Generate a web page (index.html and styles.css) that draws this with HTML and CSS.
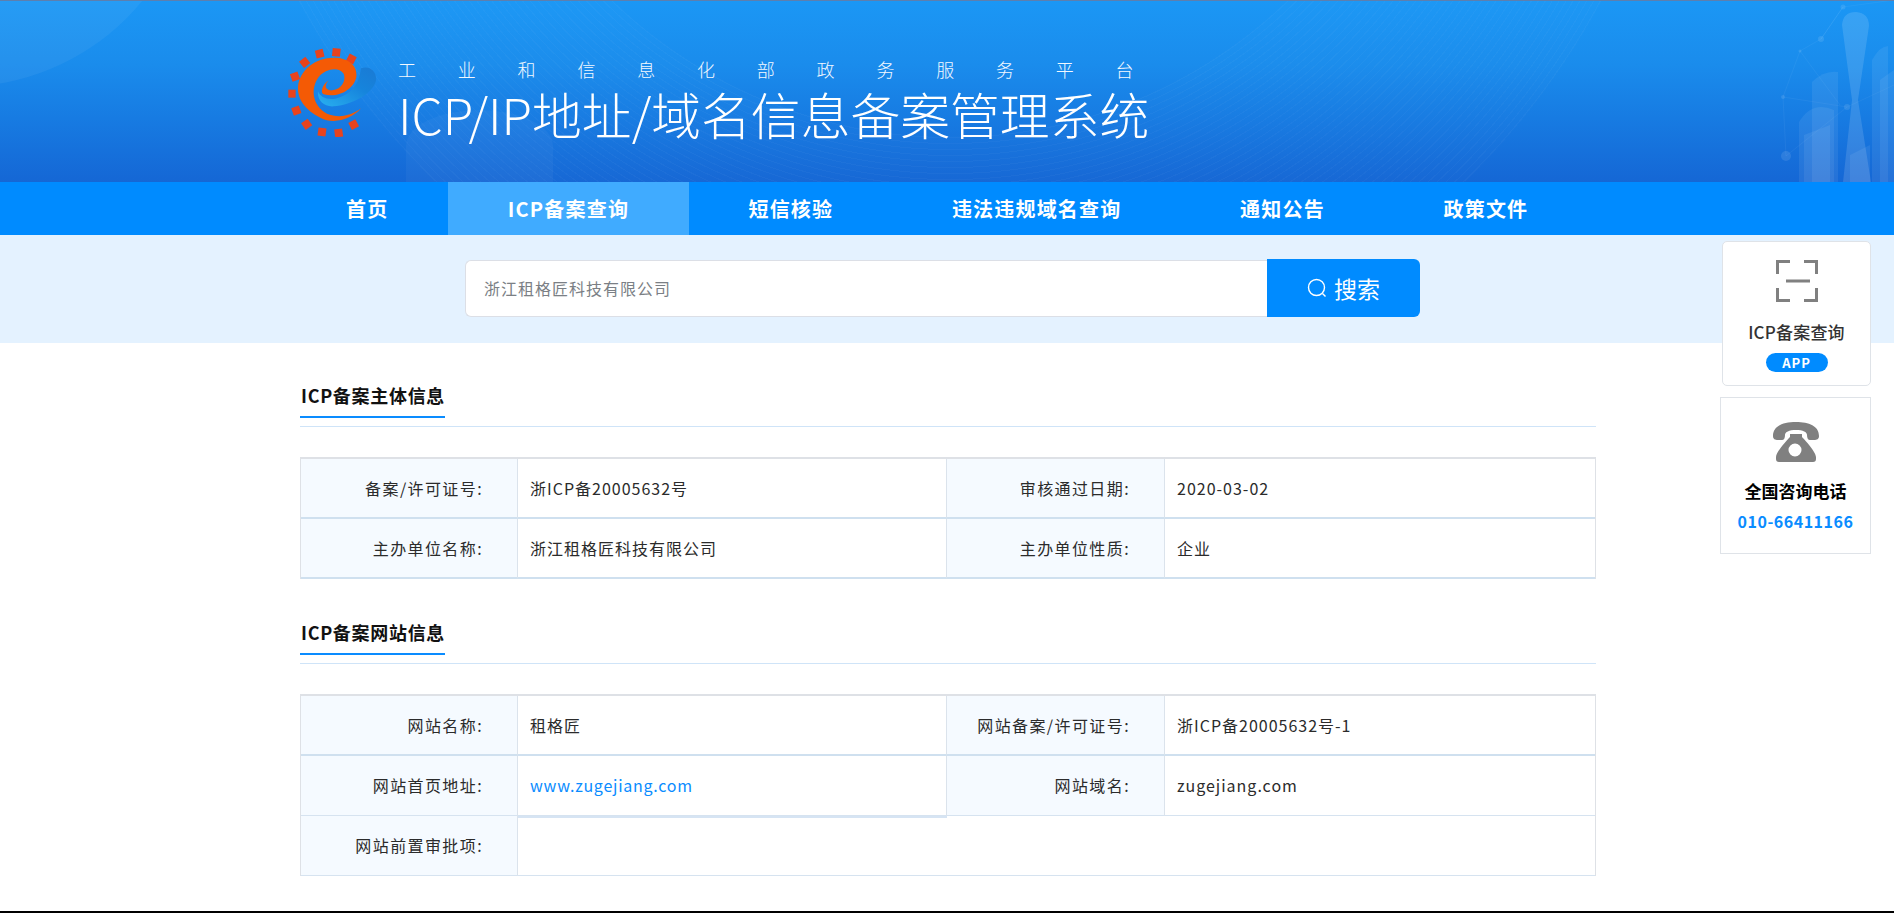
FILE: index.html
```html
<!DOCTYPE html>
<html lang="zh-CN">
<head>
<meta charset="utf-8">
<title>ICP/IP地址/域名信息备案管理系统</title>
<link rel="stylesheet" href="styles.css">
</head>
<body>
<div class="page">
  <header class="banner">
    <div class="glow glow-left"></div>
    <div class="glow glow-low"></div>
    <div class="waves"></div>
    <svg class="city" viewBox="0 0 154 182" aria-hidden="true">
      <g stroke="#fff" stroke-opacity=".07" stroke-width=".7" fill="none">
        <path d="M103 7 81 39 60 51 43 97 46 156M60 51 100 105M81 39 103 7 154 0M43 97 107 107 154 85M46 156 107 107"/>
      </g>
      <g fill="#fff" fill-opacity=".1">
        <circle cx="103" cy="7" r="2.5"/><circle cx="81" cy="39" r="3"/><circle cx="60" cy="51" r="1.5"/><circle cx="43" cy="97" r="2"/><circle cx="46" cy="156" r="5"/><circle cx="107" cy="107" r="3"/>
      </g>
      <g fill="#fff" fill-opacity=".07">
        <path d="M72 82Q84 70 98 72V182H72Z"/>
        <path d="M132 60q8-14 16-14v136h-16Z"/>
        <path d="M140 80 154 70V182H140Z"/>
        <path d="M59 122Q72 100 94 110V182H59Z"/>
        <path d="M64 135 90 125V182H64Z"/>
        <path d="M110 155 130 145V182H110Z"/>
      </g>
      <path d="M102 25Q103 12 116 12 129 13 129 26L118 100 131 182H103L112 100Z" fill="#fff" fill-opacity=".13"/>
    </svg>
    <div class="brand">
      <svg class="logo" viewBox="50 50 270 270" aria-hidden="true">
        <defs>
          <linearGradient id="swoosh" x1="0" y1="1" x2="1" y2="0">
            <stop offset="0" stop-color="#29b0f0"/>
            <stop offset=".6" stop-color="#1684dc"/>
            <stop offset="1" stop-color="#1a7ad4"/>
          </linearGradient>
        </defs>
        <g fill="#e8431d">
          <rect x="136" y="58" width="24" height="24" transform="rotate(-14 148 70)"/>
          <rect x="186" y="54" width="24" height="24" transform="rotate(6 198 66)"/>
          <rect x="231" y="74" width="24" height="24" transform="rotate(28 243 86)"/>
          <rect x="91" y="84" width="24" height="24" transform="rotate(-38 103 96)"/>
          <rect x="62" y="127" width="24" height="24" transform="rotate(-20 74 139)"/>
          <rect x="54" y="178" width="22" height="24"/>
          <rect x="66" y="229" width="24" height="24" transform="rotate(-20 78 241)"/>
          <rect x="97" y="270" width="24" height="24" transform="rotate(-35 109 282)"/>
          <rect x="143" y="293" width="24" height="24" transform="rotate(8 155 305)"/>
          <rect x="193" y="296" width="24" height="24" transform="rotate(-8 205 308)"/>
          <rect x="238" y="271" width="24" height="24" transform="rotate(-28 250 283)"/>
        </g>
        <path fill="url(#swoosh)" d="M272 114C298 104 320 124 317 150 310 190 240 226 190 228 160 230 140 210 143 183 150 200 170 210 195 205 240 195 266 165 272 114Z"/>
        <path fill="#f45a05" d="M272 234C245 266 190 284 150 262 105 240 80 205 83 170 88 115 140 80 195 82 240 84 262 110 258 140 252 175 205 205 160 192 150 188 154 165 175 150 158 168 168 182 186 180 215 176 228 150 220 130 205 108 165 115 145 140 120 175 125 225 170 250 205 265 245 256 272 234Z"/>
      </svg>
      <div class="brand-text">
        <p class="org">工业和信息化部政务服务平台</p>
        <h1 class="system">ICP/IP地址/域名信息备案管理系统</h1>
      </div>
    </div>
  </header>

  <nav class="nav">
    <a class="nav-item">首页</a>
    <a class="nav-item is-active">ICP备案查询</a>
    <a class="nav-item">短信核验</a>
    <a class="nav-item">违法违规域名查询</a>
    <a class="nav-item">通知公告</a>
    <a class="nav-item">政策文件</a>
  </nav>

  <div class="search-band">
    <div class="search">
      <div class="search-input">浙江租格匠科技有限公司</div>
      <button class="search-btn">
        <svg class="search-icon" viewBox="0 0 20 20" aria-hidden="true">
          <circle cx="9.5" cy="9.5" r="8"/><path d="M15.5 15.5 18.5 18.5"/>
        </svg>
        <span>搜索</span>
      </button>
    </div>
  </div>

  <main class="content">
    <section class="block">
      <h2 class="block-title"><span>ICP备案主体信息</span></h2>
      <table class="info">
        <colgroup><col class="c1"><col class="c2"><col class="c3"><col class="c4"></colgroup>
        <tr class="row-thick">
          <th>备案/许可证号:</th><td>浙ICP备20005632号</td>
          <th>审核通过日期:</th><td>2020-03-02</td>
        </tr>
        <tr class="row-thick">
          <th>主办单位名称:</th><td>浙江租格匠科技有限公司</td>
          <th>主办单位性质:</th><td>企业</td>
        </tr>
      </table>
    </section>

    <section class="block">
      <h2 class="block-title"><span>ICP备案网站信息</span></h2>
      <table class="info">
        <colgroup><col class="c1"><col class="c2"><col class="c3"><col class="c4"></colgroup>
        <tr class="row-thick">
          <th>网站名称:</th><td>租格匠</td>
          <th>网站备案/许可证号:</th><td>浙ICP备20005632号-1</td>
        </tr>
        <tr>
          <th>网站首页地址:</th><td class="cell-double"><a class="link">www.zugejiang.com</a></td>
          <th>网站域名:</th><td>zugejiang.com</td>
        </tr>
        <tr>
          <th>网站前置审批项:</th><td colspan="3"></td>
        </tr>
      </table>
    </section>
  </main>

  <div class="bottom-rule"></div>

  <aside class="side">
    <div class="side-card side-app">
      <svg class="scan-icon" viewBox="0 0 42 42" aria-hidden="true">
        <path d="M14 1.5H1.5V14M28 1.5H40.5V14M14 40.5H1.500V28M28 40.5H40.5V28M10 21H34"/>
      </svg>
      <div class="app-name">ICP备案查询</div>
      <div class="app-pill">APP</div>
    </div>
    <div class="side-card side-tel">
      <svg class="tel-icon" viewBox="0 0 46 40" aria-hidden="true">
        <path d="M0 14C0 4 10 0 23 0S46 4 46 14C46 17 44 18 41 18H37C35 18 34 16 34 13 34 10 30 8 23 8S12 10 12 13C12 16 11 18 9 18H5C2 18 0 17 0 14Z"/>
        <path fill-rule="evenodd" d="M17 12H29V15C32 18 43 30 43 35V37C43 39 42 40 40 40H6C4 40 3 39 3 37V35C3 30 14 18 17 15ZM22 21.500A6.500 6.500 0 1 0 22 34.500 6.500 6.500 0 1 0 22 21.500Z"/>
      </svg>
      <div class="tel-label">全国咨询电话</div>
      <div class="tel-number">010-66411166</div>
    </div>
  </aside>
</div>
</body>
</html>
```
FILE: styles.css
```css
* { box-sizing: border-box; }
html, body { margin: 0; padding: 0; background: #fff; }
body {
  font-family: "Noto Sans CJK SC", "Noto Sans", sans-serif;
  color: #333;
  overflow: hidden;
}
.page { position: relative; width: 1894px; height: 913px; overflow: hidden; display: flex; flex-direction: column; }

/* banner */
.banner {
  position: relative;
  height: 182px;
  flex: none;
  overflow: hidden;
  border-top: 1px solid #5d7fae;
  background: linear-gradient(180deg, #1b97f5 0%, #1a8cec 35%, #177be2 65%, #1567d5 100%);
  padding: 46px 0 0 287px;
}
.glow { position: absolute; background: rgba(255,255,255,.05); }
.glow-left { width: 472px; height: 472px; left: -276px; top: -386px; border-radius: 50%; }
.glow-low { width: 147px; height: 72px; left: 406px; top: 109px; border-radius: 100% 100% 0 0 / 100% 100% 0 0; background: rgba(255,255,255,.035); }
.waves {
  position: absolute;
  width: 1480px; height: 1480px;
  left: 210px; top: -1090px;
  border-radius: 50%;
  background: repeating-radial-gradient(circle at center, rgba(255,255,255,.035) 0 1px, rgba(255,255,255,.012) 1px 6px);
  -webkit-mask-image: radial-gradient(circle at center, transparent 0 485px, #000 486px 740px);
  mask-image: radial-gradient(circle at center, transparent 0 485px, #000 486px 740px);
}
.city { position: absolute; right: 0; top: -1px; width: 154px; height: 182px; }
.brand { position: relative; display: flex; gap: 21px; align-items: flex-start; }
.logo { width: 90px; height: 90px; flex: none; }
.brand-text { padding-top: 9px; }
.org {
  margin: 0;
  font-size: 18px;
  line-height: 26px;
  font-weight: 300;
  letter-spacing: 41.8px;
  color: #f2f8ff;
  white-space: nowrap;
}
.system {
  margin: 2px 0 0;
  font-size: 49.8px;
  line-height: 58px;
  font-weight: 300;
  color: #fff;
  white-space: nowrap;
}

/* nav */
.nav {
  height: 53px;
  flex: none;
  background: #008bff;
  padding-left: 286px;
  display: flex;
}
.nav-item {
  padding: 0 59.3px;
  font-size: 20px;
  font-weight: 700;
  letter-spacing: 1.2px;
  line-height: 53px;
  color: #fff;
  white-space: nowrap;
}
.nav-item:first-child { padding-left: 60px; }
.nav-item.is-active { padding: 0 60px; background: #40abff; }

/* search */
.search-band {
  height: 108px;
  flex: none;
  background: #e4f2ff;
  padding: 24px 0 0 465px;
}
.search { width: 955px; height: 58px; display: flex; }
.search-input {
  flex: 1;
  margin-top: 1px;
  background: #fff;
  border: 1px solid #dcdfe6;
  border-right: 0;
  border-radius: 6px 0 0 6px;
  padding-left: 18px;
  font-size: 16px;
  letter-spacing: 1px;
  line-height: 55px;
  color: #7b7f85;
}
.search-btn {
  width: 153px;
  border: 0;
  border-radius: 0 6px 6px 0;
  background: #008bff;
  color: #fff;
  font: 400 23px/58px "Noto Sans CJK SC", sans-serif;
  display: flex;
  align-items: center;
  justify-content: center;
  gap: 7px;
  padding: 0;
}
.search-icon { width: 20px; height: 20px; fill: none; stroke: #fff; stroke-width: 1.4; }

/* content */
.content { padding: 40px 298px 0 300px; }
.block + .block { margin-top: 41px; }
.block-title {
  margin: 0;
  padding-bottom: 8px;
  border-bottom: 1px solid #cfe4f8;
  font-size: 18px;
  font-weight: 700;
  letter-spacing: .7px;
  color: #111;
  line-height: 24px;
}
.block-title span { display: block; width: 145px; border-bottom: 2px solid #0a8cff; white-space: nowrap; padding-left: 1px; height: 35px; }
.info {
  margin-top: 30px;
  width: 1296px;
  table-layout: fixed;
  border-collapse: separate;
  border-spacing: 0;
  border-top: 2px solid #dee1e6;
  border-left: 1px solid #dee1e6;
  border-right: 1px solid #dee1e6;
  font-size: 16px;
}
.c1 { width: 217px; }
.c2 { width: 429px; }
.c3 { width: 218px; }
.info th, .info td {
  height: 60px;
  padding: 0 0 1px;
  font-weight: 400;
  letter-spacing: 1px;
  border-bottom: 1px solid #d6e3f0;
  border-right: 1px solid #dbe3ec;
  color: #2b2b2b;
  white-space: nowrap;
  vertical-align: middle;
}
.info td:last-child { border-right: 0; }
.info th { background: #f5faff; text-align: right; padding-right: 34px; letter-spacing: 1.4px; }
.info td { padding-left: 12px; }
.row-thick th, .row-thick td { border-bottom: 2px solid #cfe0ef; height: 60px; }
.cell-double { box-shadow: 0 2px 0 #d6e4f3; }
.link { color: #0a8cff; letter-spacing: .75px; }
.bottom-rule { position: absolute; left: 0; right: 0; bottom: 0; height: 2px; background: #000; }

/* side */
.side { position: absolute; left: 1720px; top: 241px; width: 151px; display: flex; flex-direction: column; align-items: flex-end; gap: 11px; }
.side-card { background: #fff; border: 1px solid #dfe3e8; display: flex; flex-direction: column; align-items: center; }
.side-app { width: 149px; height: 145px; border-radius: 5px; padding-top: 18px; }
.side-tel { width: 151px; height: 157px; padding-top: 24px; }
.scan-icon { width: 42px; height: 42px; fill: none; stroke: #808080; stroke-width: 3; }
.app-name { margin-top: 18px; font-size: 17px; letter-spacing: .2px; line-height: 24px; font-weight: 500; color: #333; }
.app-pill { margin-top: 9px; width: 62px; height: 19px; border-radius: 10px; background: #008bff; color: #fff; font-size: 13px; font-weight: 700; line-height: 19px; text-align: center; letter-spacing: 1px; }
.tel-icon { width: 46px; height: 40px; fill: #808080; }
.tel-label { margin-top: 16px; font-size: 17px; line-height: 26px; font-weight: 700; color: #000; }
.tel-number { margin-top: 4px; font-size: 16px; letter-spacing: .5px; line-height: 26px; font-weight: 700; color: #0a8cff; }
```
